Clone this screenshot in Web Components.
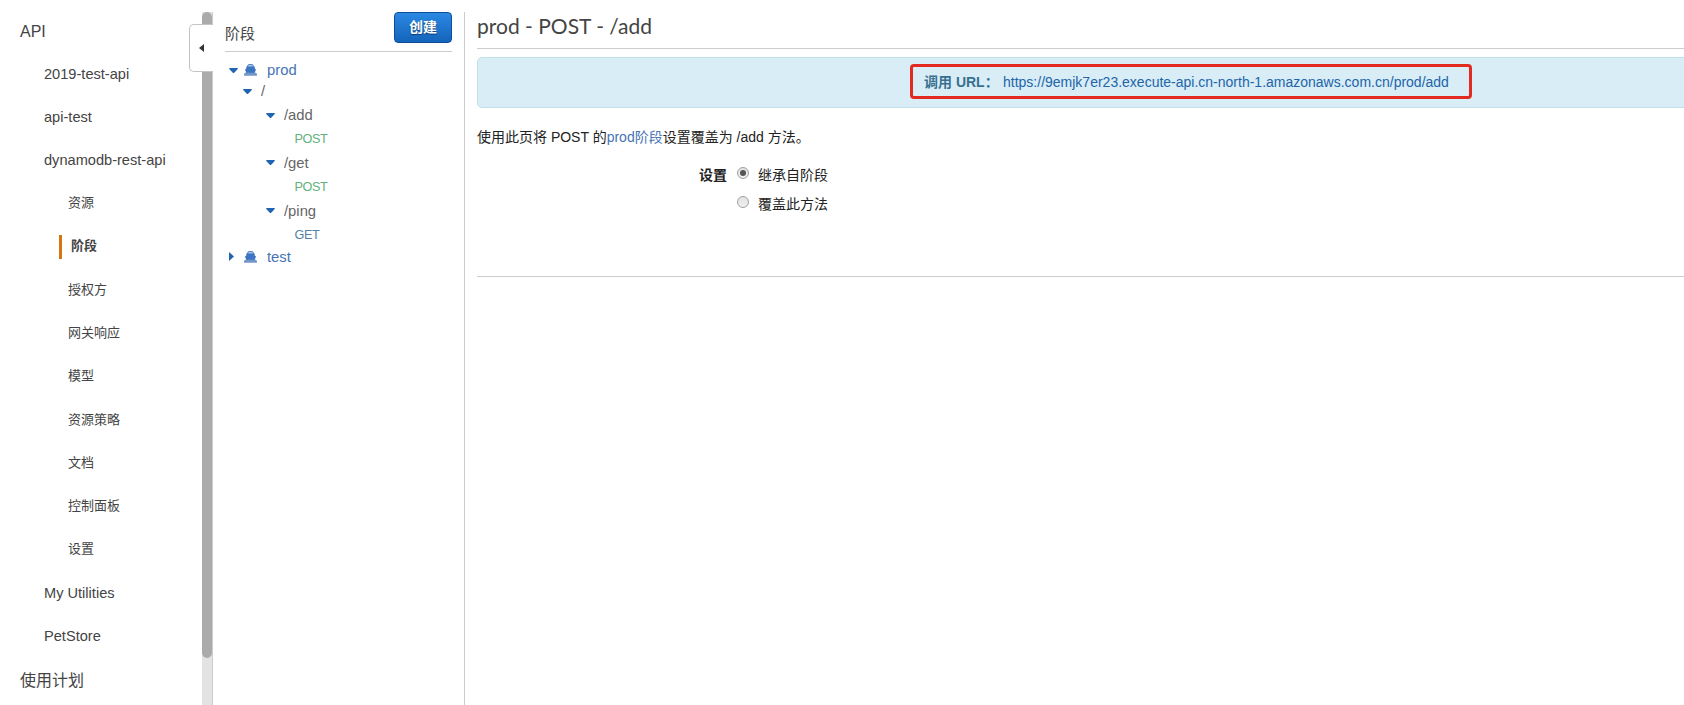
<!DOCTYPE html>
<html lang="zh-CN">
<head>
<meta charset="utf-8">
<title>API Gateway</title>
<style>
html,body{margin:0;height:100%;overflow:hidden;background:#fff}
body{font-family:"Liberation Sans","Noto Sans CJK SC",sans-serif;color:#444}
</style>
</head>
<body>
<api-console></api-console>
<script>
const define = (name, html, setup) => customElements.define(name, class extends HTMLElement {
  constructor() {
    super();
    const t = document.createElement('template');
    t.innerHTML = html;
    this.attachShadow({mode: 'open'}).append(t.content.cloneNode(true));
    if (setup) setup(this);
  }
});

define('nav-item', `<style>
:host{display:flex;align-items:center;height:43.3px;padding:2px 0 0 20px;font-size:16px;line-height:20px;color:#444;white-space:nowrap;box-sizing:border-box}
:host(:first-child){padding-top:3px}
:host([level="1"]){padding:0 0 0 44px;font-size:14.6px}
:host([level="2"]){padding:0 0 1px 68px;font-size:13px}
:host([current]){padding:0 0 0 59px;font-weight:bold}
:host([current]) span{border-left:3px solid #d5770f;padding:0 0 2px 9px;line-height:22px}
</style><span><slot></slot></span>`);

define('side-nav', `<style>
:host{display:flex;position:relative;width:213px;height:705px;box-sizing:border-box;flex:none;padding-top:8.7px}
nav{width:202px;flex:none}
.track{margin-top:3.3px;width:10px;background:#e3e3e3;border-right:1px solid #ccc}
.thumb{height:646px;background:#ababab;border-radius:5px}
.handle{position:absolute;left:189px;top:24px;width:24px;height:48px;box-sizing:border-box;background:#fff;border:1px solid #c4c4c4;border-right:0;border-radius:5px 0 0 5px;display:flex;align-items:center;padding-left:9px}
svg{display:block}
</style>
<nav>
<nav-item>API</nav-item>
<nav-item level="1">2019-test-api</nav-item>
<nav-item level="1">api-test</nav-item>
<nav-item level="1">dynamodb-rest-api</nav-item>
<nav-item level="2">资源</nav-item>
<nav-item level="2" current>阶段</nav-item>
<nav-item level="2">授权方</nav-item>
<nav-item level="2">网关响应</nav-item>
<nav-item level="2">模型</nav-item>
<nav-item level="2">资源策略</nav-item>
<nav-item level="2">文档</nav-item>
<nav-item level="2">控制面板</nav-item>
<nav-item level="2">设置</nav-item>
<nav-item level="1">My Utilities</nav-item>
<nav-item level="1">PetStore</nav-item>
<nav-item>使用计划</nav-item>
</nav>
<div class="track"><div class="thumb"></div></div>
<div class="handle"><svg width="5" height="8" viewBox="0 0 5 8"><path d="M5 0V8L0 4Z" fill="#333"/></svg></div>`);

define('tree-row', `<style>
:host{display:flex;align-items:center;white-space:nowrap;font-size:14.8px;line-height:20px;color:#666;height:var(--h);padding-left:var(--x);box-sizing:border-box}
svg{display:none;flex:none}
:host([open]) .down{display:block;width:9px;margin-right:9px}
:host([shut]) .right{display:block;width:5px;margin:0 10px 0 0}
:host([stage]) .ship{display:block;width:13px;margin:0 10px 0 0}
:host([stage][open]) .ship{margin-left:-3px}
:host([stage]){color:#4674b4}
:host([method]){font-size:12.7px;letter-spacing:-.4px;color:#63b17c}
:host([method="get"]){color:#5682a8}
</style>
<svg class="down" height="5" viewBox="0 0 9 5"><path d="M0 .8Q0 0 1 0H8Q9 0 9 .8L5.2 4.7Q4.5 5.2 3.8 4.7Z" fill="#2264b2"/></svg>
<svg class="right" height="9" viewBox="0 0 5 9"><path d="M0 0L5 4.5L0 9Z" fill="#2264b2"/></svg>
<svg class="ship" height="12" viewBox="0 0 13 12"><path d="M3.7 3V1.5Q4 .5 5 .5H8Q9 .5 9.3 1.5V3" fill="#a4c0e4" stroke="#5a87c6"/><path d="M2.3 2.6H10.7V4.6L12 5.4L10.6 9H2.4L1 5.4L2.3 4.6Z" fill="#3b74c0"/><path d="M0 10.8Q0 8.8 1.5 8.8L2.2 8.2L3.2 9.1L5 8.5L6.5 9.1L8 8.5L9.8 9.1L10.8 8.2L11.5 8.8Q13 8.8 13 10.8V11.7H0Z" fill="#7397c9"/></svg>
<slot></slot>`, el => {
  el.style.setProperty('--h', el.getAttribute('h') + 'px');
  el.style.setProperty('--x', el.getAttribute('x') + 'px');
});

define('primary-button', `<style>
:host{display:block}
button{display:block;width:58px;height:31px;padding:0 0 3px;border:1px solid #104d97;border-radius:4px;background:linear-gradient(#2b88e2,#1464bb);color:#fff;font:bold 14px "Liberation Sans","Noto Sans CJK SC",sans-serif;text-shadow:0 1px 1px #0b3a70}
</style><button><slot></slot></button>`);

define('stage-panel', `<style>
:host{display:block;width:252px;flex:none;height:693px;margin-top:12px;padding:0 12px;box-sizing:border-box;border-right:1px solid #ccc}
header{display:flex;justify-content:space-between;height:40px;box-sizing:border-box;border-bottom:1px solid #ccc;font-size:15px;line-height:20px}
header span{padding-top:12px}
.tree{padding-top:7px}
</style>
<header><span>阶段</span><primary-button>创建</primary-button></header>
<div class="tree">
<tree-row stage open h="22" x="4">prod</tree-row>
<tree-row open h="20" x="18">/</tree-row>
<tree-row open h="28" x="41">/add</tree-row>
<tree-row method="post" h="19" x="69.5">POST</tree-row>
<tree-row open h="29" x="41">/get</tree-row>
<tree-row method="post" h="19" x="69.5">POST</tree-row>
<tree-row open h="29" x="41">/ping</tree-row>
<tree-row method="get" h="19" x="69.5">GET</tree-row>
<tree-row stage shut h="25" x="4">test</tree-row>
</div>`);

define('url-alert', `<style>
:host{display:flex;align-items:flex-start;height:51px;width:1420px;box-sizing:border-box;border:1px solid #bfe2e9;border-radius:5px;background:#d8edf6;padding:6px 0 0 432px;font-size:14px}
div{display:flex;align-items:center;width:562px;height:35px;box-sizing:border-box;border:3px solid #e32a20;border-radius:4px;padding-left:11px;white-space:nowrap}
b{color:#39708f;width:79px;padding-bottom:1px}
a{color:#2264a8}
</style><div><b>调用 URL：</b><a><slot></slot></a></div>`);

define('radio-option', `<style>
:host{display:flex;height:29px;font-size:14px;line-height:20px;white-space:nowrap}
i{width:12px;height:12px;margin:2px 9px 0 0;box-sizing:border-box;border:1px solid #a0a0a0;border-radius:50%;background:linear-gradient(#e2e2e2,#f0f0f0);display:flex;align-items:center;justify-content:center}
:host([checked]) i::after{content:"";width:6px;height:6px;border-radius:50%;background:#555}
</style><i></i><slot></slot>`);

define('method-settings', `<style>
:host{display:block;flex:1;min-width:0;overflow:hidden;padding:12px 0 0 12px;color:#222;font-size:14px}
h1{font:400 21px/28px Lato,sans-serif;color:#444;margin:0;height:37px;box-sizing:border-box;border-bottom:1px solid #ccc;margin-bottom:8px}
p{margin:19px 0 0;line-height:20px;white-space:nowrap}
p a{color:#4674b4}
.form{display:flex;margin-top:18px;height:112px;padding-left:222px;box-sizing:border-box;border-bottom:1px solid #ccc;line-height:20px}
.form b{width:38px}
</style>
<h1>prod - POST - /add</h1>
<url-alert>https://9emjk7er23.execute-api.cn-north-1.amazonaws.com.cn/prod/add</url-alert>
<p>使用此页将 POST 的<a>prod阶段</a>设置覆盖为 /add 方法。</p>
<div class="form"><b>设置</b><div><radio-option checked>继承自阶段</radio-option><radio-option>覆盖此方法</radio-option></div></div>`);

define('api-console', `<style>:host{display:flex;height:705px;overflow:hidden}</style>
<side-nav></side-nav><stage-panel></stage-panel><method-settings></method-settings>`);
</script>
</body>
</html>
